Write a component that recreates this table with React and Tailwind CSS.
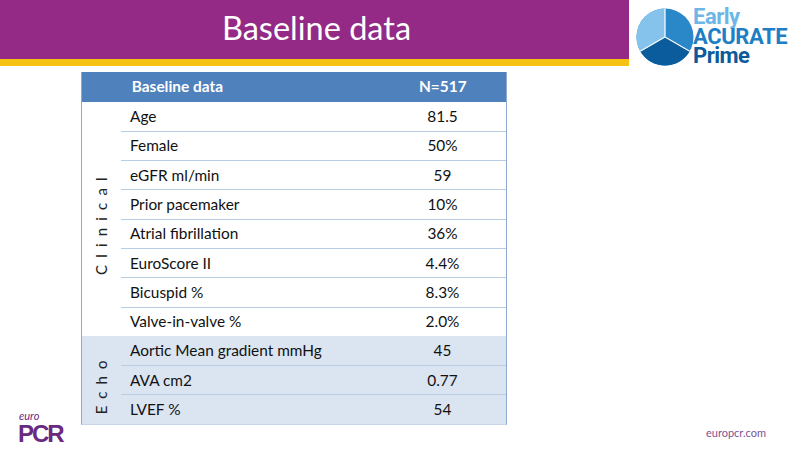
import React from "react";

const clinical = [
  ["Age", "81.5"],
  ["Female", "50%"],
  ["eGFR ml/min", "59"],
  ["Prior pacemaker", "10%"],
  ["Atrial fibrillation", "36%"],
  ["EuroScore II", "4.4%"],
  ["Bicuspid %", "8.3%"],
  ["Valve-in-valve %", "2.0%"],
];
const echo = [
  ["Aortic Mean gradient mmHg", "45"],
  ["AVA cm2", "0.77"],
  ["LVEF %", "54"],
];

function Row({ label, value, first }) {
  return (
    <div className={`flex h-[29.3px] items-center ${first ? "" : "border-t border-[#b8cce4]"}`}>
      <div className="w-[258px] pl-[9px] text-[15.4px] text-[#111]">{label}</div>
      <div className="w-[127px] text-center text-[15.4px] text-[#111]">{value}</div>
    </div>
  );
}

function Group({ name, rows, bg }) {
  return (
    <div className={`flex ${bg}`}>
      <div className="w-[41px] flex items-center justify-center">
        <span className="[writing-mode:vertical-rl] rotate-180 text-[15px] text-[#222] tracking-[0.48em] pb-[0.48em]">
          {name}
        </span>
      </div>
      <div className="flex flex-col">
        {rows.map(([l, v], i) => (
          <Row key={l} label={l} value={v} first={i === 0} />
        ))}
      </div>
    </div>
  );
}

export default function App() {
  return (
    <div
      className="relative w-[800px] h-[450px] bg-white overflow-hidden"
      style={{ fontFamily: "Lato, 'Open Sans', sans-serif" }}
    >
      <div className="flex">
        <div className="flex flex-col w-[629px]">
          <div className="h-[59px] bg-[#942a85] flex items-center justify-center">
            <span className="text-white text-[32.5px] leading-none mt-[-2px] ml-[4px]">Baseline data</span>
          </div>
          <div className="h-[7px] bg-[#f6c315]" />
        </div>
        <div className="flex items-start pl-[7px] pt-[8px]">
          <svg width="58" height="58" viewBox="0 0 58 58">
            <circle cx="29" cy="29" r="28.5" fill="#2a87c8" />
            <path d="M29 29 L29 0.5 A28.5 28.5 0 0 0 4.3 43.25 Z" fill="#86c3ec" />
            <path d="M29 29 L4.3 43.25 A28.5 28.5 0 0 0 53.7 43.25 Z" fill="#0b5c9c" />
            <path d="M29 29 L29 0.5 M29 29 L4.3 43.25 M29 29 L53.7 43.25" stroke="#ffffff" strokeWidth="1.2" />
          </svg>
          <div
            className="flex flex-col ml-[-1px] mt-[-1px] font-bold leading-[19.5px]"
            style={{ fontFamily: "Roboto, 'Liberation Sans', sans-serif" }}
          >
            <span className="text-[#6db6e6] text-[22px] tracking-[-0.5px]">Early</span>
            <span className="text-[#1f7fc4] text-[22px] tracking-[-0.4px]">ACURATE</span>
            <span className="text-[#0b5a99] text-[22px] tracking-[-0.5px]">Prime</span>
          </div>
        </div>
      </div>

      <div className="ml-[81px] mt-[6px] w-[426px] border-l border-r border-[#8eaad0] border-b border-b-[#c6d5e8]">
        <div className="flex h-[29.5px] items-center bg-[#4f81bd] text-white font-bold text-[15.4px]">
          <div className="w-[41px]" />
          <div className="w-[258px] pl-[9px]">Baseline data</div>
          <div className="w-[127px] text-center">N=517</div>
        </div>
        <Group name="Clinical" rows={clinical} bg="bg-white" />
        <Group name="Echo" rows={echo} bg="bg-[#dbe5f1]" />
      </div>

      <div className="absolute left-[18px] top-[410px] flex flex-col text-[#6a2a82] leading-none">
        <span className="italic text-[11px] ml-[1px]">euro</span>
        <span
          className="font-black text-[24px] tracking-[-2px] mt-[1px]"
          style={{ fontFamily: "'Liberation Sans', Roboto, sans-serif" }}
        >
          PCR
        </span>
      </div>
      <div className="absolute left-[706px] top-[425px] text-[11px] text-[#7a5496]">europcr.com</div>
    </div>
  );
}
